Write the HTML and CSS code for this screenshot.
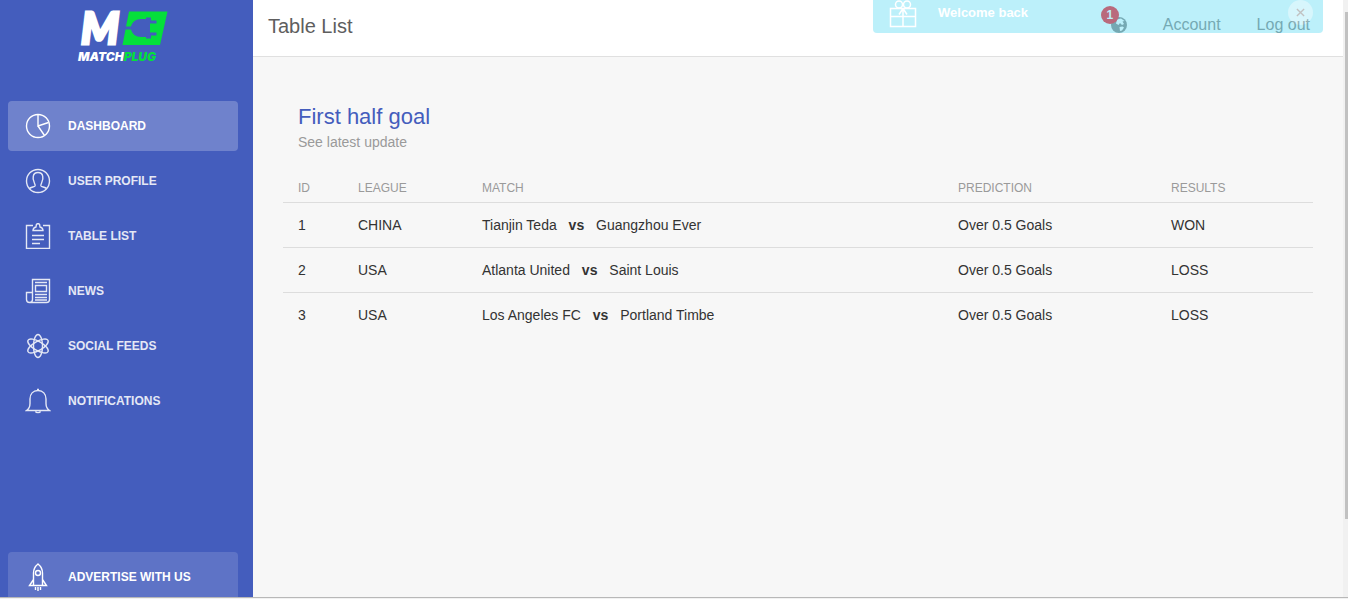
FILE: index.html
```html
<!DOCTYPE html>
<html lang="en">
<head>
    <meta charset="UTF-8">
    <meta name="viewport" content="width=device-width, initial-scale=1.0">
    <title>Matchplug - Table List</title>
    <link rel="stylesheet" href="styles.css">
</head>
<body>
    <div class="wrapper">
        <!-- Sidebar -->
        <aside class="sidebar">
            <a href="#" class="logo" aria-label="Matchplug">
                <svg width="96" height="60" viewBox="75 5 96 60">
                    <text class="logo-mark" x="81" y="44">M</text>
                    <path class="logo-green" d="M129 11.500H167.500L160 45H122.500L125.500 29.500H131C132 34 136 37 141 37H146V38.500H151V35.500H156.500V32.500H150V23.500H156.500V20.500H151V17.500H146V19H141C136 19 132 22 131 26.500H126Z"/>
                    <text class="logo-name" x="78" y="61">MATCH<tspan class="logo-green">PLUG</tspan></text>
                </svg>
            </a>
            <ul class="nav">
                <li>
                    <a href="#" class="nav-link active">
                        <svg viewBox="0 0 26 26"><circle cx="13" cy="13" r="11.500"/><path d="M13 1.500V13l10.500-3.500M13 13l6.500 9.500"/></svg>
                        <span>Dashboard</span>
                    </a>
                </li>
                <li>
                    <a href="#" class="nav-link">
                        <svg viewBox="0 0 26 26"><circle cx="13" cy="13" r="11.500"/><path d="M4.500 20.500c1-1.500 5-1.500 5.500-2.500.4-1-.1-2-.6-3C8.300 13 7.800 10 8.300 8c.5-2.500 2.400-3.500 4.700-3.500s4.200 1 4.700 3.500c.5 2 0 5-1.100 7-.5 1-1 2-.6 3 .5 1 4.500 1 5.500 2.500"/></svg>
                        <span>User Profile</span>
                    </a>
                </li>
                <li>
                    <a href="#" class="nav-link">
                        <svg viewBox="0 0 26 26"><path d="M8 2.500H1.500v23h23v-23H18M8 7.500h10c0-2-1-3-3-3.500 0-2.500-.8-3.500-2-3.500S11 1.500 11 4c-2 .5-3 1.500-3 3.500zM7 12.500h12M7 16.500h12M7 20.500h8"/></svg>
                        <span>Table List</span>
                    </a>
                </li>
                <li>
                    <a href="#" class="nav-link">
                        <svg viewBox="0 0 26 26"><path d="M7.500 21.500v-20h17v20c0 2-1 3-3 3h-17c-2 0-3-1-3-3v-7h6M7.500 21.500c0 2-1 3-3 3M10 4.500h12M10.500 7.500h11v6h-11zM10 16.500h12M10 19.500h12M10 22h12"/></svg>
                        <span>News</span>
                    </a>
                </li>
                <li>
                    <a href="#" class="nav-link">
                        <svg viewBox="0 0 26 26"><ellipse cx="13" cy="13" rx="4.500" ry="11.500"/><ellipse cx="13" cy="13" rx="4.500" ry="11.500" transform="rotate(60 13 13)"/><ellipse cx="13" cy="13" rx="4.500" ry="11.500" transform="rotate(120 13 13)"/></svg>
                        <span>Social Feeds</span>
                    </a>
                </li>
                <li>
                    <a href="#" class="nav-link">
                        <svg viewBox="0 0 26 26"><path d="M1.500 22.500h23c-3-2-3.500-4-3.500-7V11c0-5-3-8.500-8-8.500S5 6 5 11v4.500c0 3-.5 5-3.500 7zM10.500 23.500c.5 1.500 4.500 1.500 5 0M12 1.500h2"/></svg>
                        <span>Notifications</span>
                    </a>
                </li>
            </ul>
            <a href="#" class="nav-link advertise">
                <svg viewBox="0 0 26 28"><path d="M8.500 22.500V10c0-4 2-7 4.500-9 2.500 2 4.500 5 4.500 9v12.500M8.500 16.500l-4 6h17l-4-6M10.500 24v3M13 24v4M15.500 24v3"/><circle cx="13" cy="10" r="2.500"/></svg>
                <span>Advertise with us</span>
            </a>
        </aside>

        <!-- Main panel -->
        <div class="main-panel">
            <header class="navbar">
                <h1 class="navbar-title">Table List</h1>
                <nav class="navbar-menu">
                    <a href="#" class="globe" aria-label="1 notification">
                        <svg viewBox="0 0 16 16"><circle cx="8" cy="8" r="8"/><path class="land" d="M6 2.500l4-1 3.500 2.500-2 .5L13 7l-2 1-2-2-1.500 2L5 6.500zM8.500 10l3-.5 1.500 1-2 3-2 .5z"/></svg>
                        <span class="badge">1</span>
                    </a>
                    <a href="#">Account</a>
                    <a href="#">Log out</a>
                </nav>
            </header>

            <main class="content">
                <h2 class="card-title">First half goal</h2>
                <p class="category">See latest update</p>
                <table class="table">
                    <colgroup>
                        <col class="col-id">
                        <col class="col-league">
                        <col>
                        <col class="col-prediction">
                        <col class="col-results">
                    </colgroup>
                    <thead>
                        <tr>
                            <th>ID</th>
                            <th>League</th>
                            <th>Match</th>
                            <th>Prediction</th>
                            <th>Results</th>
                        </tr>
                    </thead>
                    <tbody>
                        <tr>
                            <td>1</td>
                            <td>CHINA</td>
                            <td>Tianjin Teda <b>vs</b> Guangzhou Ever</td>
                            <td>Over 0.5 Goals</td>
                            <td>WON</td>
                        </tr>
                        <tr>
                            <td>2</td>
                            <td>USA</td>
                            <td>Atlanta United <b>vs</b> Saint Louis</td>
                            <td>Over 0.5 Goals</td>
                            <td>LOSS</td>
                        </tr>
                        <tr>
                            <td>3</td>
                            <td>USA</td>
                            <td>Los Angeles FC <b>vs</b> Portland Timbe</td>
                            <td>Over 0.5 Goals</td>
                            <td>LOSS</td>
                        </tr>
                    </tbody>
                </table>
            </main>
        </div>

        <div class="scroll-track">
            <div class="scroll-thumb"></div>
        </div>
    </div>
    <div class="bottom-edge"></div>

    <!-- Welcome notification -->
    <div class="alert" role="status">
        <svg class="gift" viewBox="0 0 28 30"><path d="M1.500 10.500h25v18h-25zM1.500 18.500h25M14 10.500v18M14 10.500l-4 6M14 10.500l4 6"/><circle cx="10" cy="6.500" r="3.500"/><circle cx="18" cy="6.500" r="3.500"/></svg>
        <span>Welcome back</span>
        <button type="button" class="close" aria-label="Close">
            <svg viewBox="0 0 10 10"><path d="M1 1l8 8M9 1l-8 8"/></svg>
        </button>
    </div>
</body>
</html>
```
FILE: styles.css
```css
* {
    box-sizing: border-box;
}

body {
    margin: 0;
    min-height: 100vh;
    display: flex;
    flex-direction: column;
    font-family: "Liberation Sans", Arial, sans-serif;
    font-size: 14px;
    color: #333;
    background-color: #f7f7f7;
}

a {
    color: inherit;
    text-decoration: none;
}

.wrapper {
    flex: 1;
    display: flex;
}

/* Sidebar */
.sidebar {
    width: 253px;
    flex-shrink: 0;
    display: flex;
    flex-direction: column;
    padding: 5px 15px 0 8px;
    background-color: #445dbd;
    color: white;
}

.logo {
    align-self: center;
    height: 60px;
    margin-bottom: 36px;
}

.logo svg {
    overflow: visible;
}

.logo-mark,
.logo-name {
    font-weight: 900;
    font-style: italic;
    fill: white;
}

.logo-mark {
    font-family: Lato, sans-serif;
    font-size: 43px;
    stroke: white;
    stroke-width: 3;
}

.logo-name {
    font-family: Inter, sans-serif;
    font-size: 12px;
}

.logo-green {
    fill: #05df3b;
}

.nav {
    list-style: none;
    margin: 0;
    padding: 0;
    display: flex;
    flex-direction: column;
    gap: 5px;
}

.nav-link {
    display: flex;
    align-items: center;
    gap: 17px;
    height: 50px;
    padding: 0 17px;
    border-radius: 4px;
    font-size: 12px;
    font-weight: bold;
    text-transform: uppercase;
    opacity: 0.86;
}

.nav-link svg {
    width: 26px;
    height: 26px;
    fill: none;
    stroke: white;
    stroke-width: 1.4;
}

.nav-link.active {
    background-color: rgba(255, 255, 255, 0.23);
    opacity: 1;
}

.nav-link.advertise {
    height: 45px;
    margin-top: auto;
    padding-top: 4px;
    border-radius: 4px 4px 0 0;
    background-color: rgba(255, 255, 255, 0.14);
    opacity: 1;
}

.nav-link.advertise svg {
    height: 28px;
}

/* Main panel */
.main-panel {
    flex: 1;
    min-width: 0;
}

.navbar {
    display: flex;
    justify-content: space-between;
    align-items: center;
    height: 57px;
    padding: 0 33px 4px 15px;
    background-color: white;
    border-bottom: 1px solid #e0e0e0;
}

.navbar-title {
    margin: 0;
    font-size: 20px;
    font-weight: normal;
    color: #5e5e5e;
}

.navbar-menu {
    display: flex;
    align-items: center;
    gap: 36px;
    padding-bottom: 2px;
    font-size: 16px;
    color: #9a9a9a;
}

.globe {
    position: relative;
    height: 16px;
}

.globe svg {
    display: block;
    width: 16px;
    height: 16px;
    fill: #9a9a9a;
}

.globe .land {
    fill: white;
}

.badge {
    position: absolute;
    top: -11px;
    left: -10px;
    width: 18px;
    height: 18px;
    border-radius: 50%;
    background-color: #fb404b;
    color: white;
    font-size: 12px;
    font-weight: bold;
    line-height: 18px;
    text-align: center;
}

.content {
    padding: 46px 30px 30px;
}

.card-title {
    margin: 0 15px;
    font-size: 22px;
    font-weight: normal;
    line-height: 28px;
    color: #445dbd;
}

.category {
    margin: 0 15px;
    line-height: 22px;
    color: #9a9a9a;
}

/* Prediction table */
.table {
    width: 100%;
    margin-top: 20px;
    border-collapse: collapse;
    table-layout: fixed;
}

.col-id {
    width: 60px;
}

.col-league {
    width: 124px;
}

.col-prediction {
    width: 213px;
}

.col-results {
    width: 157px;
}

.table th,
.table td {
    padding: 0 15px;
    text-align: left;
}

.table th {
    height: 29px;
    padding-top: 2px;
    font-size: 12px;
    font-weight: normal;
    text-transform: uppercase;
    color: #9a9a9a;
}

.table td {
    height: 45px;
    border-top: 1px solid #ddd;
}

.table b {
    margin: 0 8px;
}

/* Scrollbar and bottom edge */
.scroll-track {
    width: 5px;
    padding: 12px 0 78px 2px;
    display: flex;
    background-color: #f1f1f1;
}

.scroll-thumb {
    flex: 1;
    background-color: #c1c1c1;
}

.bottom-edge {
    height: 2px;
    border-top: 1px solid #b8b8b8;
    background-color: #f1f1f1;
}

.alert {
    position: fixed;
    top: -8px;
    right: 25px;
    width: 450px;
    height: 41px;
    display: flex;
    align-items: center;
    gap: 21px;
    padding: 0 10px 0 16px;
    border-radius: 4px;
    background-color: #23ccef;
    color: white;
    font-weight: bold;
    opacity: 0.3;
}

.alert span {
    font-size: 13px;
}

.gift {
    width: 28px;
    height: 30px;
    fill: none;
    stroke: white;
    stroke-width: 1.5;
}

.close {
    width: 25px;
    height: 25px;
    margin-left: auto;
    padding: 0;
    border: none;
    border-radius: 50%;
    background-color: rgba(255, 255, 255, 0.4);
    cursor: pointer;
}

.close svg {
    display: block;
    width: 9px;
    height: 9px;
    margin: 0 auto;
    stroke: #333;
    stroke-width: 1.5;
}
```
